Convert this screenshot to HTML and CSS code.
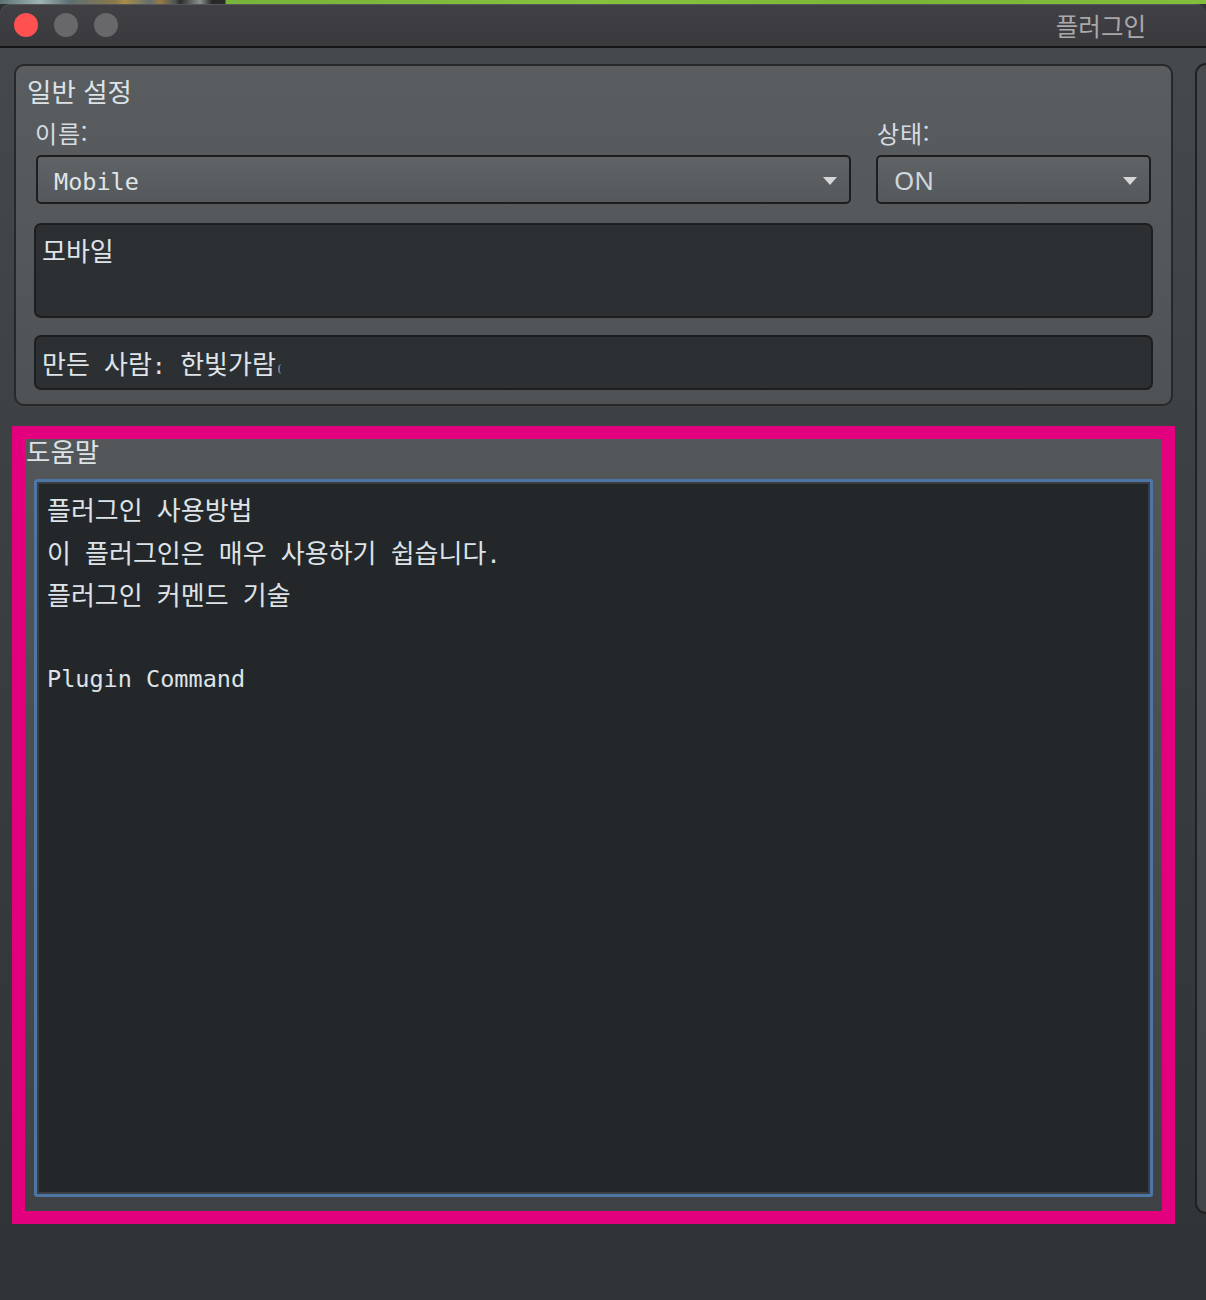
FILE: index.html
```html
<!DOCTYPE html>
<html lang="ko">
<head>
<meta charset="utf-8">
<title>플러그인</title>
<link rel="stylesheet" href="styles.css">
</head>
<body>
<div class="strip"></div>
<div class="window">
  <div class="titlebar">
    <div class="lights">
      <span class="light red"></span>
      <span class="light grey"></span>
      <span class="light grey"></span>
    </div>
    <div class="title">플러그인</div>
  </div>
  <div class="content">
    <div class="left">
      <section class="group general">
        <div class="group-title">일반 설정</div>
        <div class="fields">
          <div class="field name-field">
            <div class="label">이름:</div>
            <div class="combo name-combo"><span class="mono combo-text">Mobile</span><span class="arrow"></span></div>
          </div>
          <div class="field status-field">
            <div class="label">상태:</div>
            <div class="combo status-combo"><span class="sans">ON</span><span class="arrow"></span></div>
          </div>
        </div>
        <div class="textbox desc mono"><span class="ko">모바일</span></div>
        <div class="textbox author mono"><span class="author-text"><span class="ko">만든</span> <span class="ko">사람</span>: <span class="ko">한빛가람</span><span class="caret"></span></span></div>
      </section>
      <section class="group help">
        <div class="group-title help-title">도움말</div>
        <div class="help-box mono">
          <div class="line"><span class="ko">플러그인</span> <span class="ko">사용방법</span></div>
          <div class="line"><span class="ko">이</span> <span class="ko">플러그인은</span> <span class="ko">매우</span> <span class="ko">사용하기</span> <span class="ko">쉽습니다</span>.</div>
          <div class="line"><span class="ko">플러그인</span> <span class="ko">커멘드</span> <span class="ko">기술</span></div>
          <div class="line">&nbsp;</div>
          <div class="line">Plugin Command</div>
        </div>
      </section>
    </div>
    <aside class="side-panel"></aside>
  </div>
</div>
</body>
</html>
```

FILE: styles.css
```css
html, body {
  margin: 0;
  padding: 0;
}
body {
  width: 1206px;
  height: 1300px;
  overflow: hidden;
  background: #303336;
  font-family: "Noto Sans CJK KR", "Noto Sans", sans-serif;
  position: relative;
}
.strip {
  height: 4px;
  background: linear-gradient(90deg, #5d7272 0px, #9fb4b4 40px, #5d6f70 70px, #8a7a4c 115px, #a88d48 125px, #61716f 150px, #9b7b42 160px, #4a5758 175px, #2c2c2c 180px, #8c9290 200px, #272727 212px, #2a2a2a 225px, #77b23a 226px, #86c13e 600px, #7ab536 900px, #82bd3c 1206px);
}
.window {
  display: flex;
  flex-direction: column;
  height: 1296px;
  border-radius: 10px 10px 0 10px;
  overflow: hidden;
  background: linear-gradient(180deg, #474a4d 0%, #3f4245 30%, #36393c 70%, #303336 100%);
}
.titlebar {
  height: 42px;
  flex: none;
  display: flex;
  align-items: center;
  justify-content: space-between;
  background: linear-gradient(180deg, #414145 0%, #3a3a3e 100%);
  border-bottom: 2px solid #141414;
  border-radius: 10px 0 0 0;
  box-shadow: inset 0 1px 0 #55555a;
}
.lights {
  display: flex;
  gap: 16px;
  padding-left: 14px;
}
.light {
  width: 24px;
  height: 24px;
  border-radius: 50%;
  background: #68686b;
}
.light.red { background: #fe5150; }
.title {
  color: #a9a9ab;
  font-size: 24.5px;
  padding-right: 60px;
}
.content {
  flex: 1;
  display: flex;
  gap: 22px;
  padding: 16px 0 0 14px;
}
.left {
  width: 1159px;
  flex: none;
  display: flex;
  flex-direction: column;
}
.group {
  box-sizing: border-box;
}
.general {
  height: 342px;
  border: 2px solid #26282a;
  border-radius: 10px;
  background: linear-gradient(180deg, #595d60 0%, #53575a 60%, #4e5255 100%);
  padding: 10px 18px 0 18px;
}
.group-title {
  color: #dde2e6;
  font-size: 26.5px;
  line-height: 30px;
  height: 30px;
  margin-left: -7px;
}
.fields {
  display: grid;
  grid-template-columns: 817px 1fr;
  column-gap: 25px;
  margin-top: 13px;
}
.label {
  color: #d6dce1;
  font-size: 24px;
  line-height: 28px;
  height: 28px;
  padding-left: 1px;
  margin-bottom: 8px;
  letter-spacing: 0.8px;
}
.combo {
  box-sizing: border-box;
  height: 49px;
  border: 2px solid #1c1e20;
  border-radius: 5px;
  background: linear-gradient(180deg, #5f6366 0%, #56595c 100%);
  display: flex;
  align-items: center;
  justify-content: space-between;
  padding: 0 12px 0 16px;
  color: #dfe4e8;
}
.combo-text {
  padding-top: 4px;
}
.name-combo { margin-left: 2px; }
.status-combo { margin-right: 2px; }
.mono {
  font-family: "DejaVu Sans Mono", "Noto Sans CJK KR", monospace;
  font-size: 23.5px;
}
.ko {
  font-family: "Noto Sans CJK KR", sans-serif;
  font-size: 26px;
}
.sans {
  font-family: "Noto Sans", "DejaVu Sans", sans-serif;
  font-size: 26px;
  color: #cfd6dc;
}
.arrow {
  width: 0;
  height: 0;
  border-left: 7px solid transparent;
  border-right: 7px solid transparent;
  border-top: 8px solid #d4d6d8;
  margin-top: 2px;
}
.textbox {
  box-sizing: border-box;
  border: 2px solid #1c1e20;
  border-radius: 7px;
  background: #2d3033;
  color: #dee4e9;
  padding-left: 6px;
}
.desc {
  height: 95px;
  margin-top: 19px;
  padding-top: 8px;
  line-height: 34px;
}
.author {
  height: 55px;
  margin-top: 17px;
  display: flex;
  align-items: center;
}
.author-text {
  white-space: pre;
}
.caret {
  display: inline-block;
  width: 2px;
  height: 10px;
  border-left: 2px solid #6f8fb3;
  border-radius: 4px 0 0 4px;
  margin-left: 2px;
  opacity: 0.8;
}
.help {
  margin-top: 20px;
  margin-left: -2px;
  width: 1163px;
  height: 798px;
  border: 13px solid #e3007f;
  background: linear-gradient(180deg, #53575a 0%, #4a4e51 40%, #3f4245 100%);
  padding: 0 9px 14px 9px;
  display: flex;
  flex-direction: column;
}
.help-title {
  margin-top: -3px;
  margin-left: -8px;
  flex: none;
}
.help-box {
  flex: 1;
  margin-top: 13px;
  border: 3px solid #4e76a5;
  border-radius: 3px;
  box-shadow: inset 0 0 0 2px #3a3e42;
  background: #24272a;
  color: #dde3e8;
  padding: 6px 10px;
}
.line {
  height: 42.5px;
  line-height: 42.5px;
  white-space: pre;
}
.side-panel {
  flex: 1;
  margin-bottom: 86px;
  margin-top: -1px;
  border: 2px solid #1f2123;
  border-right: none;
  border-radius: 11px 0 0 11px;
  background: linear-gradient(180deg, #484c4f 0%, #434649 100%);
}
```
